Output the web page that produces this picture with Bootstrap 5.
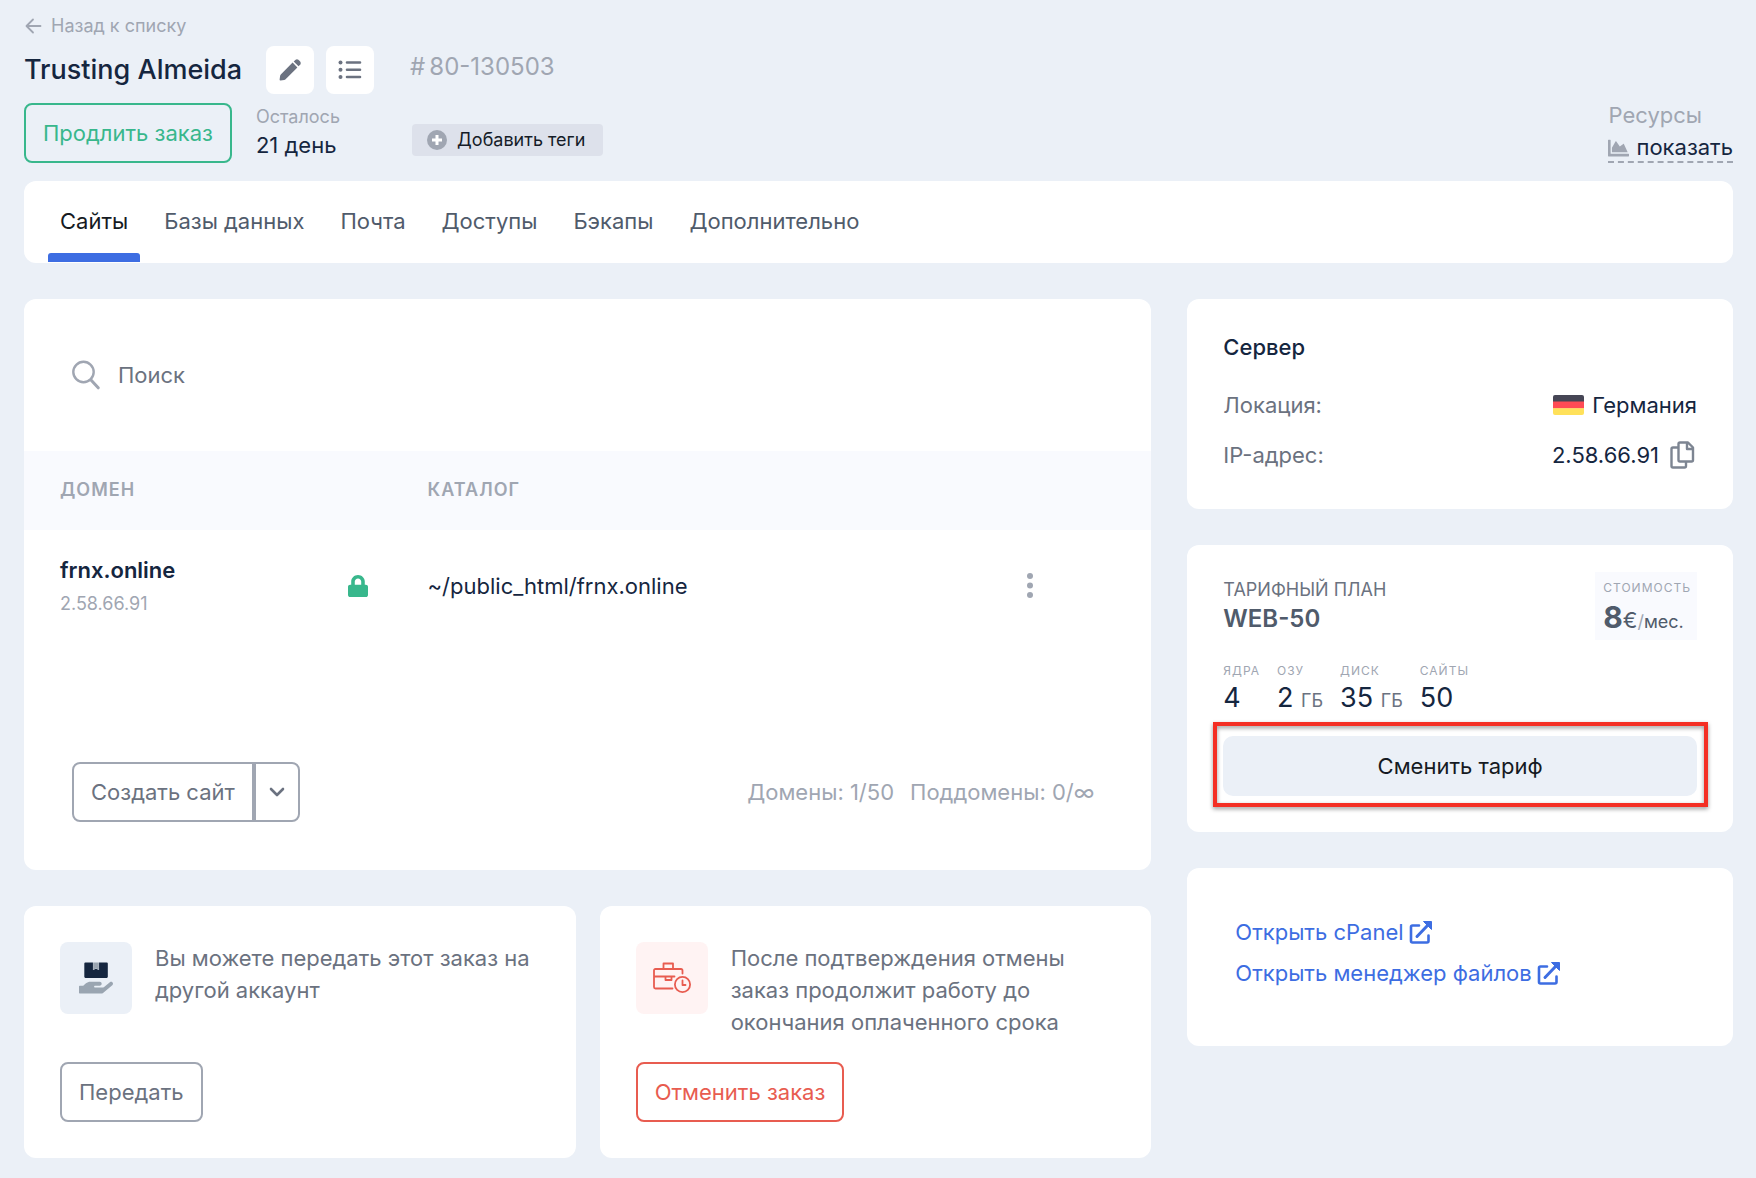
<!DOCTYPE html>
<html lang="ru">
<head>
<meta charset="utf-8">
<meta name="viewport" content="width=device-width, initial-scale=1">
<title>Trusting Almeida</title>
<link href="https://cdn.jsdelivr.net/npm/bootstrap@5.3.0/dist/css/bootstrap.min.css" rel="stylesheet">
<style>
:root{--navy:#15263f;--slate:#6b7280;--steel:#505b6b;--mist:#a0a6b2;--page:#ebf0f7;--blue:#3d6de2;--green:#38b78c;--red:#e85c50}
body{background:var(--page);color:var(--navy);font-family:Inter,"Liberation Sans",sans-serif;font-size:22px;line-height:32px}
svg{display:block;flex:none}
a{text-decoration:none}
.page{padding:12px 23px 20px 24px}
.t-mist{color:var(--mist)}
.t-slate{color:var(--slate)}
.t-steel{color:var(--steel)}
.t-navy{color:var(--navy)}
.text-s{font-size:18px;line-height:28px}
.back-link{color:var(--mist);gap:9px}
.page-head{margin-top:2px;margin-bottom:18px;gap:36px}
.head-main{gap:9px}
.title-row{gap:24px}
.title-row h1{font-size:27px;line-height:48px;font-weight:500}
.tool-btn{width:48px;height:48px;background:#fff;border:0;border-radius:8px;color:var(--slate);padding:0}
.tool-set{gap:12px}
.btn-line{height:60px;border:2px solid;border-radius:8px;font-size:22px;line-height:32px;padding:0 17px}
.btn-green{color:var(--green);border-color:var(--green)}
.btn-gray{color:var(--slate);border-color:var(--mist)}
.btn-red{color:var(--red);border-color:var(--red)}
.head-side{padding:5px 0 7px}
.order-id{font-size:24px}
.tag-btn{background:#dde1eb;border:0;border-radius:4px;height:32px;font-size:18px;line-height:28px;padding:0 18px 0 15px;gap:10px;color:#151c28;margin-left:2px}
.res-line{line-height:28px}
.res-link{border-bottom:2px dashed var(--mist);color:var(--navy);gap:7px}
.panel{background:#fff;border:0;border-radius:12px}
.tab-bar{padding:0 24px;gap:12px}
.tab-bar .nav-link{color:var(--steel);padding:24px 12px 26px;position:relative}
.tab-bar .nav-link.active{color:#151a22}
.tab-bar .nav-link.active::after{content:"";position:absolute;left:0;right:0;bottom:1px;height:9px;background:var(--blue);border-radius:3px 3px 0 0}
.content-row{--bs-gutter-x:36px;margin-top:36px}
.panel-stack{gap:36px}
.pair-row{--bs-gutter-x:24px}
.search-row{padding:0 48px;height:152px;gap:18px}
.search-row input{border:0;outline:0;background:none;padding:0;color:var(--navy)}
.search-row input::placeholder{color:var(--slate);opacity:1}
.sites{table-layout:fixed}
.sites th{background:#f9fafe;color:var(--mist);font-size:18px;line-height:28px;font-weight:600;letter-spacing:1px;text-transform:uppercase;padding:25px 0 26px}
.sites td{padding:24px 0}
.sites th:first-child,.sites td:first-child{padding-left:36px}
.more-btn{border:0;background:none;padding:0;color:var(--mist);width:28px}
.sites-foot{padding:120px 57px 48px 48px}
.split-left{border-radius:8px 0 0 8px}
.split-right{border-radius:0 8px 8px 0;padding:0 13px}
.note{padding:36px}
.note-top{gap:23px;min-height:96px}
.note-icon{width:72px;height:72px;border-radius:8px;background:var(--page)}
.note-icon.pink{background:#fff3f3}
.note .btn-line{margin-top:24px}
.server{padding:32px 36px 36px}
.server h2{font-size:22px;line-height:32px;font-weight:500;margin-bottom:24px}
.server dl{gap:14px}
.server dl>div{line-height:36px}
.plan{padding:27px 36px 36px}
.caps-m{font-size:18px;line-height:28px;text-transform:uppercase}
.caps-s{font-size:12px;line-height:16px;text-transform:uppercase;letter-spacing:1px}
.plan-name{font-size:24px;font-weight:600;line-height:30px}
.price{background:#f9fafe;padding:8px 6px 4px 8px;line-height:32px}
.price-num{font-size:30px;font-weight:700}
.price .caps-s{margin-bottom:5px}
.spec-row{gap:17px;margin-top:23px;margin-bottom:19px}
.spec-row .num{font-size:27px;line-height:38px}
.callout{position:relative}
.callout::after{content:"";position:absolute;inset:-14px -11px -11px -10px;border:4px solid #f42f24;filter:drop-shadow(0 2px 2px rgba(0,0,0,.4));pointer-events:none}
.btn-soft{height:60px;background:var(--page);border:0;border-radius:10px;font-size:22px;color:#151a22}
.links{padding:48px 48px 57px;gap:9px}
.links a{color:var(--blue);gap:5px}
</style>
</head>
<body>
<svg width="0" height="0" class="position-absolute" aria-hidden="true">
  <symbol id="ext" viewBox="0 0 23 23"><path d="M10 4.500H3.500Q2 4.500 2 6V20Q2 21.500 3.500 21.500H18Q19.500 21.500 19.500 20V14.500" fill="none" stroke="currentColor" stroke-width="2.600" stroke-linecap="round"/><path d="M8 15.500L18.500 4.500" stroke="currentColor" stroke-width="3" stroke-linecap="round"/><path d="M14.500.500H22.500V8.500Z" fill="currentColor" stroke="currentColor" stroke-linejoin="round"/></symbol>
</svg>
<div class="page container-fluid">
  <a href="#" class="back-link text-s d-inline-flex align-items-center align-top">
    <svg width="18" height="16" viewBox="0 0 18 16" fill="none" stroke="currentColor" stroke-width="1.800" stroke-linecap="round" stroke-linejoin="round"><path d="M16.500 8H3M9 1.500L2.500 8L9 14.500"/></svg>Назад к списку</a>

  <header class="page-head d-flex">
    <div class="head-main d-flex flex-column">
      <div class="title-row d-flex">
        <h1 class="mb-0">Trusting Almeida</h1>
        <div class="tool-set d-flex">
          <button type="button" class="tool-btn d-flex align-items-center justify-content-center" aria-label="Переименовать"><svg width="24" height="24" viewBox="0 0 24 24" fill="currentColor"><path d="M14.600 4.600L19.400 9.400L7.600 21.200Q7 21.800 6.200 21.900L2.600 22.500Q1.500 22.600 1.600 21.500L2.100 17.900Q2.200 17 2.800 16.400Z"/><path d="M15.700 3.500L17.600 1.700Q19 .600 20.400 1.800L22.200 3.600Q23.400 5 22.300 6.400L20.500 8.300Z"/></svg></button>
          <button type="button" class="tool-btn d-flex align-items-center justify-content-center" aria-label="Список"><svg width="24" height="20" viewBox="0 0 24 20" fill="currentColor"><circle cx="2.500" cy="2.500" r="2"/><circle cx="2.500" cy="9.800" r="2"/><circle cx="2.500" cy="17" r="2"/><path d="M9 2.500H22M9 9.800H22M9 17H22" stroke="currentColor" stroke-width="2.600" stroke-linecap="round"/></svg></button>
        </div>
      </div>
      <div class="d-flex gap-4">
        <button type="button" class="btn btn-line btn-green">Продлить заказ</button>
        <div><div class="text-s t-mist">Осталось</div><div class="res-line">21 день</div></div>
      </div>
    </div>
    <div class="head-side d-flex flex-column justify-content-between align-items-start">
      <div class="order-id t-mist d-flex gap-1"><span>#</span><span>80-130503</span></div>
      <button type="button" class="tag-btn d-flex align-items-center"><svg width="20" height="20" viewBox="0 0 20 20"><circle cx="10" cy="10" r="10" fill="#a0a6b2"/><path d="M10 5V15M5 10H15" stroke="#fff" stroke-width="3"/></svg>Добавить теги</button>
    </div>
    <div class="ms-auto d-flex flex-column justify-content-end">
      <div class="res-line t-mist mb-1">Ресурсы</div>
      <a href="#" class="res-link res-line d-flex align-items-center"><svg width="21" height="20" viewBox="0 0 512 460" preserveAspectRatio="none" fill="#a0a6b2"><path d="M500 384c6.600 0 12 5.400 12 12v40c0 6.600-5.400 12-12 12H12c-6.600 0-12-5.400-12-12V76c0-6.600 5.400-12 12-12h40c6.600 0 12 5.400 12 12v308h436zM372.700 159.500L288 216l-85.300-113.700c-5.100-6.800-15.500-6.300-19.900 1L96 248v104h384l-89.900-187.800c-3.200-6.500-11.400-8.700-17.400-4.700z"/></svg>показать</a>
    </div>
  </header>

  <nav class="panel tab-bar nav">
    <a class="nav-link active" aria-current="page" href="#">Сайты</a>
    <a class="nav-link" href="#">Базы данных</a>
    <a class="nav-link" href="#">Почта</a>
    <a class="nav-link" href="#">Доступы</a>
    <a class="nav-link" href="#">Бэкапы</a>
    <a class="nav-link" href="#">Дополнительно</a>
  </nav>

  <div class="row content-row">
    <main class="col-8 d-flex flex-column panel-stack">
      <section class="panel card">
        <label class="search-row d-flex align-items-center">
          <svg width="28" height="30" viewBox="0 0 28 30" fill="none" stroke="#a0a6b2" stroke-linecap="round"><circle cx="11.500" cy="12" r="10.200" stroke-width="2.400"/><path d="M19 20L26.200 27.800" stroke-width="3"/></svg>
          <input type="search" class="flex-grow-1" placeholder="Поиск" aria-label="Поиск">
        </label>
        <table class="sites w-100">
          <colgroup><col style="width:28.700%"><col style="width:7.100%"><col><col style="width:12%"></colgroup>
          <thead><tr><th>Домен</th><th></th><th>Каталог</th><th></th></tr></thead>
          <tbody><tr>
            <td><div class="fw-semibold">frnx.online</div><div class="text-s t-mist mt-1">2.58.66.91</div></td>
            <td><svg width="20" height="22" viewBox="0 0 448 512" preserveAspectRatio="none" fill="#38b78c"><path d="M400 224h-24v-72C376 68.200 307.800 0 224 0S72 68.200 72 152v72H48c-26.500 0-48 21.500-48 48v192c0 26.500 21.500 48 48 48h352c26.500 0 48-21.500 48-48V272c0-26.500-21.500-48-48-48zm-104 0H152v-72c0-39.700 32.300-72 72-72s72 32.300 72 72v72z"/></svg></td>
            <td>~/public_html/frnx.online</td>
            <td><button type="button" class="more-btn d-flex justify-content-center" aria-label="Действия"><svg width="6" height="26" viewBox="0 0 6 26" fill="currentColor"><circle cx="3" cy="3" r="3"/><circle cx="3" cy="12.500" r="3"/><circle cx="3" cy="22" r="3"/></svg></button></td>
          </tr></tbody>
        </table>
        <div class="sites-foot d-flex justify-content-between align-items-center">
          <div class="d-flex">
            <button type="button" class="btn btn-line btn-gray split-left">Создать сайт</button>
            <button type="button" class="btn btn-line btn-gray split-right" aria-label="Ещё варианты"><svg width="16" height="10" viewBox="0 0 16 10" fill="none" stroke="currentColor" stroke-width="2.600" stroke-linecap="round" stroke-linejoin="round"><path d="M2 2L8 8L14 2"/></svg></button>
          </div>
          <div class="d-flex gap-3 t-mist"><span>Домены: 1/50</span><span>Поддомены: 0/∞</span></div>
        </div>
      </section>

      <div class="row pair-row">
        <div class="col-6">
          <section class="panel card note h-100 align-items-start">
            <div class="note-top d-flex align-items-start">
              <div class="note-icon d-flex align-items-center justify-content-center flex-shrink-0"><svg width="34" height="32" viewBox="0 0 576 520" preserveAspectRatio="none"><path fill="#9aa5b1" d="M565.300 328.100c-11.800-10.700-30.200-10-42.600 0L430.300 402c-11.300 9.100-25.400 14-40 14H272c-8.800 0-16-7.200-16-16s7.200-16 16-16h78.300c15.900 0 30.700-10.900 33.300-26.600 3.300-20-12.100-37.400-31.600-37.400H192c-27 0-53.100 9.300-74.100 26.300L71.400 384H16c-8.800 0-16 7.200-16 16v96c0 8.800 7.200 16 16 16h356.800c14.500 0 28.600-4.900 40-14L564 377c15.200-12.100 16.400-35.300 1.300-48.900z"/><path fill="#15263f" d="M108 8H236V130L288 108L340 130V8H470Q488 8 488 26V240Q488 258 470 258H108Q90 258 90 240V26Q90 8 108 8Z"/><path fill="#9aa5b1" d="M240 8H336V124L288 104L240 124Z"/></svg></div>
              <div class="t-slate">Вы можете передать этот заказ на другой аккаунт</div>
            </div>
            <button type="button" class="btn btn-line btn-gray">Передать</button>
          </section>
        </div>
        <div class="col-6">
          <section class="panel card note h-100 align-items-start">
            <div class="note-top d-flex align-items-start">
              <div class="note-icon pink d-flex align-items-center justify-content-center flex-shrink-0"><svg width="38" height="32" viewBox="0 0 38 32" fill="none" stroke="#e85c50" stroke-width="1.800" stroke-linecap="round" stroke-linejoin="round"><path d="M10.500 7V1.500H20V7M29.500 11.500V8.500Q29.500 7 28 7H2.500Q1 7 1 8.500V25Q1 26.500 2.500 26.500H19.500M1 14.500H21.500M12.500 14.500V18H18.500V14.500"/><circle cx="29.500" cy="22.500" r="7.600"/><path d="M29.500 18.500V23H32.500"/></svg></div>
              <div class="t-slate">После подтверждения отмены заказ продолжит работу до окончания оплаченного срока</div>
            </div>
            <button type="button" class="btn btn-line btn-red">Отменить заказ</button>
          </section>
        </div>
      </div>
    </main>

    <aside class="col-4 d-flex flex-column panel-stack">
      <section class="panel card server">
        <h2>Сервер</h2>
        <dl class="d-flex flex-column mb-0">
          <div class="d-flex justify-content-between"><dt class="fw-normal t-slate">Локация:</dt><dd class="mb-0 d-flex align-items-center gap-2"><svg width="31" height="20" viewBox="0 0 31 20"><clipPath id="flag"><rect width="31" height="20" rx="2"/></clipPath><g clip-path="url(#flag)"><path fill="#464655" d="M0 0H31V7H0Z"/><path fill="#ff4b55" d="M0 6.500H31V13.500H0Z"/><path fill="#ffe15a" d="M0 13.300H31V20H0Z"/></g></svg>Германия</dd></div>
          <div class="d-flex justify-content-between"><dt class="fw-normal t-slate">IP-адрес:</dt><dd class="mb-0 d-flex align-items-center">2.58.66.91<button type="button" class="btn p-0 border-0 t-slate ms-2" aria-label="Копировать"><svg width="30" height="30" viewBox="0 0 30 30" fill="none" stroke="#7d8592" stroke-width="2.400" stroke-linejoin="round"><path d="M13 2.500H21L26 7.500V20Q26 21.500 24.500 21.500H13Q11.500 21.500 11.500 20V4Q11.500 2.500 13 2.500ZM20 2.500V9H26"/><path d="M11.500 7.500H6Q4.500 7.500 4.500 9V26Q4.500 27.500 6 27.500H17.500Q19 27.500 19 26V22"/></svg></button></dd></div>
        </dl>
      </section>

      <section class="panel card plan">
        <div class="d-flex justify-content-between align-items-start">
          <div class="pt-1"><div class="caps-m t-slate">Тарифный план</div><div class="plan-name t-steel">WEB-50</div></div>
          <div class="price t-steel"><div class="caps-s t-mist">Стоимость</div><span class="price-num">8</span>€<span class="text-s"><span class="t-mist">/</span>мес.</span></div>
        </div>
        <div class="spec-row d-flex">
          <div><div class="caps-s t-mist">Ядра</div><div class="num">4</div></div>
          <div><div class="caps-s t-mist">ОЗУ</div><div class="num">2 <span class="caps-m t-slate">ГБ</span></div></div>
          <div><div class="caps-s t-mist">Диск</div><div class="num">35 <span class="caps-m t-slate">ГБ</span></div></div>
          <div><div class="caps-s t-mist">Сайты</div><div class="num">50</div></div>
        </div>
        <div class="callout"><button type="button" class="btn btn-soft w-100">Сменить тариф</button></div>
      </section>

      <section class="panel card links align-items-start">
        <a href="#" class="d-flex align-items-center">Открыть cPanel<svg width="23" height="23"><use href="#ext"/></svg></a>
        <a href="#" class="d-flex align-items-center">Открыть менеджер файлов<svg width="23" height="23"><use href="#ext"/></svg></a>
      </section>
    </aside>
  </div>
</div>
<script src="https://cdn.jsdelivr.net/npm/bootstrap@5.3.0/dist/js/bootstrap.bundle.min.js"></script>
</body>
</html>
